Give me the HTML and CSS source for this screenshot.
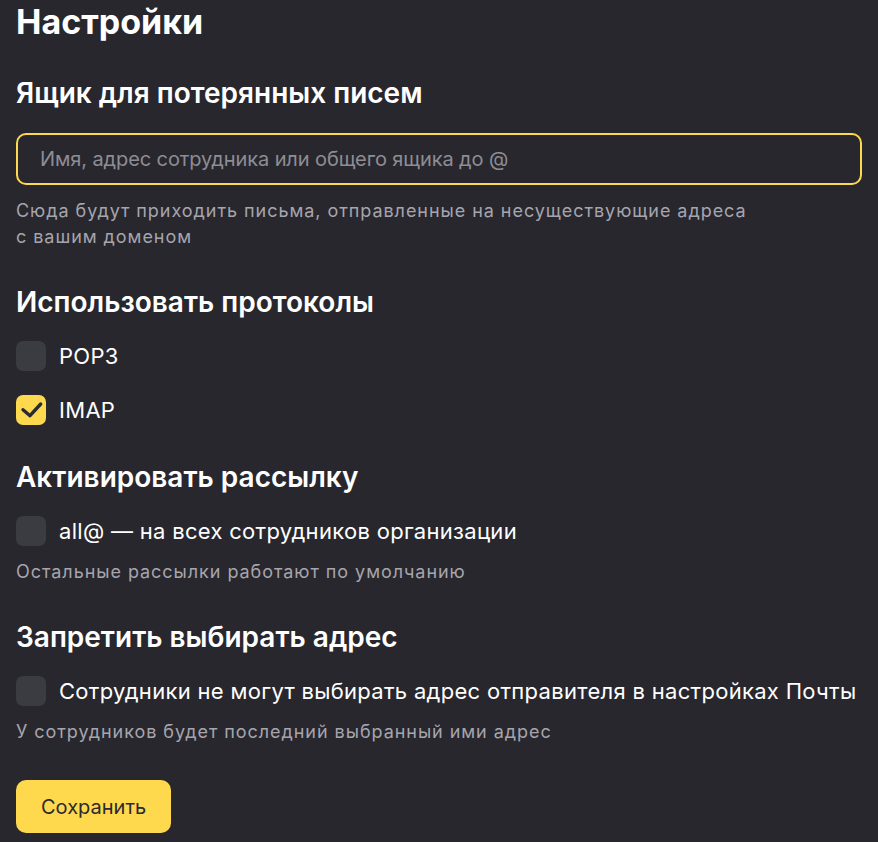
FILE: index.html
```html
<!DOCTYPE html>
<html lang="ru">
<head>
<meta charset="utf-8">
<link rel="stylesheet" href="styles.css">
</head>
<body>
<main class="page">
  <h1 class="title">Настройки</h1>

  <section class="section">
    <h2 class="heading heading-first">Ящик для потерянных писем</h2>
    <div class="field">
      <input class="input" type="text" placeholder="Имя, адрес сотрудника или общего ящика до @">
    </div>
    <p class="hint hint-field">Сюда будут приходить письма, отправленные на несуществующие адреса<br>с вашим доменом</p>
  </section>

  <section class="section">
    <h2 class="heading">Использовать протоколы</h2>
    <div class="checks">
      <label class="check"><span class="box"></span><span class="label">POP3</span></label>
      <label class="check"><span class="box box-on"><svg viewBox="0 0 30 30" width="30" height="30"><path d="M7 14.7l7 6 10.7-11.7" fill="none" stroke="#2b2a31" stroke-width="3.4" stroke-linecap="round" stroke-linejoin="round"/></svg></span><span class="label">IMAP</span></label>
    </div>
  </section>

  <section class="section">
    <h2 class="heading">Активировать рассылку</h2>
    <div class="checks">
      <label class="check"><span class="box"></span><span class="label">all@ — на всех сотрудников организации</span></label>
    </div>
    <p class="hint hint-check">Остальные рассылки работают по умолчанию</p>
  </section>

  <section class="section">
    <h2 class="heading">Запретить выбирать адрес</h2>
    <div class="checks">
      <label class="check"><span class="box"></span><span class="label">Сотрудники не могут выбирать адрес отправителя в настройках Почты</span></label>
    </div>
    <p class="hint hint-check">У сотрудников будет последний выбранный ими адрес</p>
  </section>

  <button class="btn" type="button">Сохранить</button>
</main>
</body>
</html>
```
FILE: styles.css
```css
* { box-sizing: border-box; }
html, body { margin: 0; padding: 0; }
body {
  background: #28272e;
  color: #ffffff;
  font-family: "Inter", "Noto Sans", sans-serif;
  width: 878px;
  height: 842px;
  overflow: hidden;
}
.page {
  padding: 0 16px;
  display: flex;
  flex-direction: column;
}
.title {
  margin: 0;
  font-size: 34px;
  font-weight: 700;
  line-height: 44px;
}
.section { display: flex; flex-direction: column; }
.heading {
  margin: 34px 0 0;
  font-size: 28px;
  font-weight: 600;
  line-height: 36px;
}
.heading-first { margin-top: 31px; }
.field { margin-top: 22px; }
.input {
  display: block;
  width: 100%;
  height: 52px;
  border: 2px solid #ffd94d;
  border-radius: 10px;
  background: transparent;
  padding: 0 22px;
  font-family: inherit;
  font-size: 20px;
  letter-spacing: -0.1px;
  color: #fff;
  outline: none;
}
.input::placeholder { color: #8e8d94; }
.hint {
  margin: 0;
  font-size: 18px;
  letter-spacing: 0.95px;
  line-height: 26px;
  color: #a6a5ad;
}
.hint-field { margin-top: 13px; }
.hint-check { margin-top: 13px; }
.checks { display: flex; flex-direction: column; gap: 24px; margin-top: 21px; }
.check { display: flex; align-items: center; gap: 13px; }
.box {
  width: 30px; height: 30px;
  border-radius: 7px;
  background: #3b3b42;
  flex: none;
  display: flex;
}
.box-on { background: #ffd94d; }
.label { font-size: 22px; letter-spacing: 0.3px; line-height: 30px; }
.btn {
  align-self: flex-start;
  margin-top: 35px;
  height: 53px;
  padding: 0 25px;
  border: none;
  border-radius: 10px;
  background: #ffd94d;
  color: #2b2a31;
  font-family: inherit;
  font-size: 20px;
}
```
